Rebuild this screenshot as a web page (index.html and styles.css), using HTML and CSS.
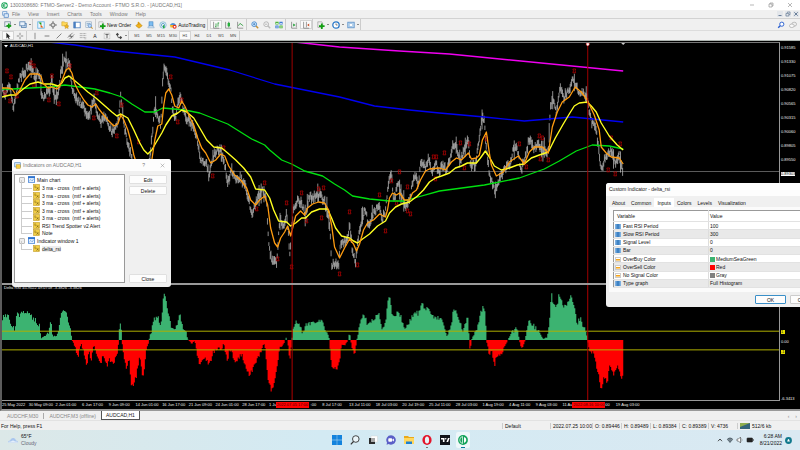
FILE: index.html
```html
<!DOCTYPE html>
<html lang="en">
<head>
<meta charset="utf-8">
<title>Trading terminal</title>
<link rel="stylesheet" href="styles.css">
</head>
<body>
<header class="titlebar">
  <svg class="ico" viewBox="0 0 10 10"><circle cx="5" cy="5" r="4.6" fill="#18a558"/><path d="M4.600 1.600A3.500 3.500 0 0 0 4.600 8.400Z" fill="none" stroke="#fff" stroke-width=".8"/><path d="M6 2V8Q8.300 7.200 8.300 5Q8.300 2.700 6 2" fill="#fff"/></svg>
  <span class="grow">1300308680: FTMO-Server2 - Demo Account - FTMO S.R.O. - [AUDCAD,H1]</span>
  <div class="wincontrols">
    <button aria-label="Minimize"><svg viewBox="0 0 6 6"><path d="M1 3H5" stroke="#888" stroke-width=".6"/></svg></button>
    <button aria-label="Restore"><svg viewBox="0 0 6 6"><path d="M1 2H4V5H1ZM2 2V1H5V4H4" fill="none" stroke="#888" stroke-width=".6"/></svg></button>
    <button aria-label="Close"><svg viewBox="0 0 6 6"><path d="M1 1L5 5M5 1L1 5" stroke="#888" stroke-width=".6"/></svg></button>
  </div>
</header>

<nav class="menubar">
  <svg class="ico" viewBox="0 0 10 10"><rect x="1" y="1" width="6" height="5" fill="#eaf2fb" stroke="#5a8fc8"/><rect x="3" y="4" width="6" height="5" fill="#dbe9f8" stroke="#4a7fc0"/></svg>
  <button>File</button><button>View</button><button>Insert</button><button>Charts</button><button>Tools</button><button>Window</button><button>Help</button>
  <div class="childcontrols">
    <button aria-label="Minimize chart"><svg viewBox="0 0 6 6"><path d="M1.5 4.5H4.5" stroke="#6a7f9a"/></svg></button>
    <button aria-label="Restore chart"><svg viewBox="0 0 6 6"><path d="M1 2.5H3.8V5H1ZM2.4 2V1H5V3.6H4" fill="none" stroke="#6a7f9a" stroke-width=".7"/></svg></button>
    <button aria-label="Close chart"><svg viewBox="0 0 6 6"><path d="M1.3 1.3L4.7 4.7M4.7 1.3L1.3 4.7" stroke="#6a7f9a"/></svg></button>
  </div>
</nav>

<div class="toolbar">
  <div class="group">
    <button class="drop" aria-label="New chart"><svg viewBox="0 0 10 10"><rect x="1" y="1" width="7" height="6" fill="#eef3f8" stroke="#789"/><path d="M6 3V9M3 6H9" stroke="#12a012" stroke-width="2.2"/></svg></button>
    <button class="drop" aria-label="Profiles"><svg viewBox="0 0 10 10"><rect x="3" y="3" width="6" height="5" fill="#d4e4f4" stroke="#5580b0"/><rect x="1" y="1" width="6.500" height="5" fill="#eaf2fb" stroke="#5580b0"/></svg></button>
  </div>
  <div class="group">
    <button aria-label="Market watch"><svg viewBox="0 0 10 10"><rect x="1" y="1" width="8" height="8" fill="#eef6ff" stroke="#5bb0e5"/><path d="M2 2H5.500V5.500Z" fill="#18a018"/><path d="M8 8H4.500V4.500Z" fill="#e06010"/></svg></button>
    <button aria-label="Data window"><svg viewBox="0 0 10 10"><circle cx="5" cy="5" r="2.6" fill="none" stroke="#666"/><path d="M5 0V4M5 6V10M0 5H4M6 5H10" stroke="#666"/></svg></button>
    <button aria-label="Navigator"><svg viewBox="0 0 10 10"><path d="M1 1H4L5 2H8V6H1Z" fill="#ffd95a" stroke="#c89a20" stroke-width=".6"/><path d="M7 4L8 6L10 6L8.500 7.500L9 9.500L7 8.500L5 9.500L5.500 7.500L4 6L6 6Z" fill="#f6b71e" stroke="#a87808" stroke-width=".4"/></svg></button>
    <button aria-label="Terminal"><svg viewBox="0 0 10 10"><rect x="1" y="1.500" width="8" height="7" fill="#fff" stroke="#4a7fc0"/><rect x="1" y="1" width="2.500" height="8" fill="#4a7fc0"/></svg></button>
    <button aria-label="Strategy tester"><svg viewBox="0 0 10 10"><rect x="1" y="1" width="7" height="7" fill="#edf3f8" stroke="#88a0b8" stroke-width=".7"/><path d="M2 3H7M2 5H5" stroke="#7a9fc4"/><circle cx="6" cy="6" r="2" fill="#bfe0ff" stroke="#4a7fc0" stroke-width=".7"/><path d="M7.500 7.500L9.500 9.500" stroke="#c79030" stroke-width="1.300"/></svg></button>
  </div>
  <div class="group">
    <button class="wide"><svg viewBox="0 0 10 10"><path d="M1 1H6L7 3V8H1Z" fill="#f5f5f5" stroke="#999" stroke-width=".7"/><path d="M6 3V10M2.500 6.500H9.500" stroke="#12a012" stroke-width="2.200"/></svg>New Order</button>
    <button aria-label="MetaEditor"><svg viewBox="0 0 10 10"><path d="M1 6L5 2L9 6L5 9Z" fill="#f2b21c" stroke="#a87808" stroke-width=".6"/><path d="M4 1L5 5" stroke="#d99a10" stroke-width="1.500"/></svg></button>
    <button aria-label="Hosting"><svg viewBox="0 0 10 10"><rect x="2.500" y="1" width="5" height="5" fill="#7bbcf0" stroke="#3c80c0" stroke-width=".7"/><path d="M1 8.500Q1 6 3.500 6.500Q5 5 6.500 6.500Q9 6 9 8.500Z" fill="#d5e6f5" stroke="#6a97c4" stroke-width=".6"/></svg></button>
    <button aria-label="Signals"><svg viewBox="0 0 10 10"><circle cx="5" cy="5" r="4" fill="none" stroke="#7ab8d8"/><circle cx="5" cy="5" r="2" fill="none" stroke="#4a9ac8"/><path d="M5 5V9H7V6Z" fill="#22a844"/></svg></button>
    <button class="wide"><svg viewBox="0 0 10 10"><path d="M1 5Q5 0 9 5Z" fill="#4a90d9"/><path d="M1 5L9 5L7 8H2Z" fill="#f2b92c"/><circle cx="7" cy="7.200" r="2.500" fill="#e02a1c"/><rect x="6" y="6.200" width="2" height="2" fill="#fff"/></svg>AutoTrading</button>
  </div>
  <div class="group">
    <button class="on" aria-label="Bar chart"><svg viewBox="0 0 10 10"><path d="M2 1V9H9" fill="none" stroke="#666" stroke-width=".8"/><path d="M5 3V8M5 7H4M7.500 2V7M7.500 2.500H9" stroke="#2a9a3a"/></svg></button>
    <button aria-label="Candlesticks"><svg viewBox="0 0 10 10"><path d="M2 1V9H9" fill="none" stroke="#666" stroke-width=".8"/><path d="M6 1V8" stroke="#177a27"/><rect x="4.500" y="2.500" width="3" height="4" fill="#23b03a"/></svg></button>
    <button aria-label="Line chart"><svg viewBox="0 0 10 10"><path d="M2 1V9H9" fill="none" stroke="#666" stroke-width=".8"/><path d="M3 6L5 3L9 6" fill="none" stroke="#2a9a3a"/></svg></button>
  </div>
  <div class="group">
    <button aria-label="Zoom in"><svg viewBox="0 0 10 10"><path d="M6 6L9 9" stroke="#c79030" stroke-width="1.800"/><circle cx="4" cy="4" r="3" fill="#d4ecff" stroke="#3a7fc8"/><path d="M4 2.500V5.500M2.500 4H5.500" stroke="#2468b0" stroke-width=".8"/></svg></button>
    <button aria-label="Zoom out"><svg viewBox="0 0 10 10"><path d="M6 6L9 9" stroke="#bbb" stroke-width="1.800"/><circle cx="4" cy="4" r="3" fill="#f3f3f3" stroke="#aaa"/><path d="M2.500 4H5.500" stroke="#999" stroke-width=".8"/></svg></button>
    <button aria-label="Tile windows"><svg viewBox="0 0 10 10"><rect x="1" y="1" width="8" height="8" fill="#fff"/><path d="M.500 1H4.500V4.500H.500ZM5.500 5.500H9.500V9H5.500Z" fill="#3fae2a"/><path d="M5.500 1H9.500V4.500H5.500ZM.500 5.500H4.500V9H.500Z" fill="#2c6fd0"/><path d="M1.200 3H4M6.200 3H9M1.200 7.500H4M6.200 7.500H9" stroke="#fff"/></svg></button>
  </div>
  <div class="group">
    <button aria-label="Auto scroll"><svg viewBox="0 0 10 10"><path d="M2 1V9H9" fill="none" stroke="#666" stroke-width=".8"/><path d="M4 3V7L7 5Z" fill="#23a03a"/><path d="M8 2V8" stroke="#666" stroke-width=".7"/></svg></button>
    <button class="on" aria-label="Chart shift"><svg viewBox="0 0 10 10"><path d="M2 1V9H9M5.500 1V8" fill="none" stroke="#666" stroke-width=".8"/><path d="M9 3V7L6.500 5Z" fill="#c84a20"/></svg></button>
  </div>
  <div class="group">
    <button class="drop" aria-label="Indicators"><svg viewBox="0 0 10 10"><path d="M1 1H6L7 3V8H1Z" fill="#eee" stroke="#888" stroke-width=".7"/><path d="M6 3V10M2.500 6.500H9.500" stroke="#12a012" stroke-width="2.200"/></svg></button>
    <button class="drop" aria-label="Periods"><svg viewBox="0 0 10 10"><circle cx="5" cy="5" r="4" fill="#fff" stroke="#2a78c8" stroke-width="1.600"/><path d="M5 3V5H7" fill="none" stroke="#444" stroke-width=".8"/></svg></button>
    <button class="drop" aria-label="Templates"><svg viewBox="0 0 10 10"><rect x="1" y="1.500" width="8" height="7" fill="#bcd9f2" stroke="#5a8fc8"/><rect x="3" y="3.500" width="4" height="3" fill="#fff" stroke="#7aa5d0" stroke-width=".5"/></svg></button>
  </div>
  <div class="search">
    <button aria-label="Search"><svg viewBox="0 0 10 10"><circle cx="6" cy="4" r="2.600" fill="#fff" stroke="#2a5fd0" stroke-width="1.200"/><path d="M4 6L1.500 8.500" stroke="#2a5fd0" stroke-width="1.800"/></svg></button>
    <button aria-label="Chat"><svg viewBox="0 0 10 10"><ellipse cx="6.500" cy="4" rx="3" ry="2.500" fill="#eee" stroke="#999" stroke-width=".7"/><ellipse cx="3.500" cy="6" rx="3" ry="2.200" fill="#f8f8f8" stroke="#999" stroke-width=".7"/></svg></button>
  </div>
</div>

<div class="toolbar lines">
  <div class="group">
    <button class="on" aria-label="Cursor"><svg viewBox="0 0 10 10"><path d="M3 1V8L4.800 6.500L6 9L7 8.500L5.900 6H8Z" fill="#222"/></svg></button>
    <button aria-label="Crosshair"><svg viewBox="0 0 10 10"><path d="M5 1V4M5 6V9M1 5H4M6 5H9" stroke="#555" stroke-width=".8"/></svg></button>
  </div>
  <div class="group">
    <button aria-label="Vertical line"><svg viewBox="0 0 10 10"><path d="M5 1V9" stroke="#555" stroke-width=".8"/></svg></button>
    <button aria-label="Horizontal line"><svg viewBox="0 0 10 10"><path d="M2 5H8" stroke="#555" stroke-width=".9"/></svg></button>
    <button aria-label="Trendline"><svg viewBox="0 0 10 10"><path d="M2 8L8 2" stroke="#555" stroke-width=".9"/></svg></button>
    <button aria-label="Channel"><svg viewBox="0 0 10 10"><path d="M1 7L7 1M3 9L9 3M2 5L8 6M4 3L6 8" stroke="#555" stroke-width=".8"/></svg></button>
    <button aria-label="Fibonacci"><svg viewBox="0 0 10 10"><path d="M1 2H9M1 4.500H9M1 7H9M7 8.500H9" stroke="#777" stroke-width=".8" stroke-dasharray="1.200 .6"/></svg></button>
    <button aria-label="Text">A</button>
    <button aria-label="Text label"><svg viewBox="0 0 10 10"><rect x="1.500" y="1.500" width="7" height="7" fill="none" stroke="#888" stroke-width=".6" stroke-dasharray="1 .6"/><path d="M3 3H7M5 3V7.500" stroke="#444"/></svg></button>
    <button class="drop" aria-label="Arrows"><svg viewBox="0 0 10 10"><path d="M1 3L3 1L5 3L3 5ZM5 7L7 5L9 7L7 9Z" fill="#444"/><path d="M3 4L4 7H6" fill="none" stroke="#444"/></svg></button>
  </div>
  <div class="group frames">
    <button>M1</button><button>M5</button><button>M15</button><button>M30</button><button class="on">H1</button><button>H4</button><button>D1</button><button>W1</button><button>MN</button>
  </div>
</div>

<main class="chart">
  <section class="panel">
    <svg id="price" viewBox="2 43 778 240" preserveAspectRatio="none"></svg>
    <h1><svg viewBox="0 0 4 4"><path d="M0 1H4L2 3.500Z" fill="#fff"/></svg>AUDCAD,H1</h1>
  </section>
  <div class="axis prices">
    <span>0.91585</span><span>0.91330</span><span>0.91075</span><span>0.90820</span><span>0.90565</span><span>0.90315</span><span>0.90060</span><span>0.89805</span><span>0.89550</span><span class="bid">0.89303</span>
  </div>
  <section class="panel sub">
    <svg id="delta" viewBox="2 285 778 117" preserveAspectRatio="none"></svg>
    <h2>Delta RSI 45.9022 49.0758 -3.3826 -3.3826</h2>
  </section>
  <div class="axis levels">
    <span class="level">1</span><span>0.00</span><span class="level">-1</span><span class="low">-6.3413</span>
  </div>
  <div class="dates">
    <span>25 May 2022</span><span>30 May 09:00</span><span>2 Jun 01:00</span><span>6 Jun 17:00</span><span>9 Jun 09:00</span><span>14 Jun 01:00</span><span>16 Jun 17:00</span><span>21 Jun 09:00</span><span>24 Jun 01:00</span><span>28 Jun 17:00</span><span>1 Ju</span><span class="tail">:00</span><span>8 Jul 17:00</span><span>13 Jul 11:00</span><span>18 Jul 03:00</span><span>20 Jul 19:00</span><span>25 Jul 11:00</span><span>28 Jul 03:00</span><span>1 Aug 19:00</span><span>4 Aug 11:00</span><span>9 Aug 03:00</span><span>11 Au</span><span class="tail">:00</span><span>19 Aug 03:00</span>
    <b class="mark first">2022.07.05 17:00</b><b class="mark second">2022.08.16 10:00</b>
  </div>
</main>

<nav class="tabs">
  <button>AUDCHF,M30</button><button>AUDCHF,M3 (offline)</button><button class="active">AUDCAD,H1</button>
  <div class="scroll"><button aria-label="Previous tab">‹</button><button aria-label="Next tab">›</button></div>
</nav>

<footer class="status">
  <span class="grow">For Help, press F1</span>
  <span class="w48">Default</span><span class="w42">2022.07.25 10:00</span><span>O: 0.89446</span><span>H: 0.89489</span><span>L: 0.89384</span><span>C: 0.89389</span><span>V: 4736</span>
  <span class="net"><svg viewBox="0 0 10 6"><rect width="10" height="6" fill="#35657a"/><path d="M0 0H10L0 4Z" fill="#8fae4e"/></svg>512/6 kb</span>
</footer>

<div class="taskbar">
  <div class="weather">
    <svg viewBox="0 0 12 8"><path d="M1 6.500Q1 4.500 3 4.500Q4 1.500 6.500 2Q8.500 2.200 9 4.500Q11 4.500 11 6.500Z" fill="#a9c6ee"/><path d="M1 6.500Q2 5 4 5.500Q6 3.500 8 5.500Q10 5 11 6.500Z" fill="#e4eefb"/></svg>
    <p>65°F<br><small>Cloudy</small></p>
  </div>
  <div class="apps">
    <button aria-label="Start"><svg viewBox="0 0 10 10"><path d="M0 0H4.800V4.800H0ZM5.200 0H10V4.800H5.200ZM0 5.200H4.800V10H0ZM5.200 5.200H10V10H5.200Z" fill="#1383dd"/></svg></button>
    <button aria-label="Search"><svg viewBox="0 0 10 10"><circle cx="5.800" cy="4" r="3.300" fill="#eaf4f8" stroke="#333" stroke-width=".9"/><path d="M3.500 6.500L.800 9.300" stroke="#333" stroke-width="1.200"/></svg></button>
    <button aria-label="Task view"><svg viewBox="0 0 10 10"><rect x="3" y="1" width="6.500" height="6" fill="#fff" stroke="#ccc" stroke-width=".4"/><rect x="1" y="3" width="6" height="6" fill="#2b2b2b"/><rect x="3" y="3" width="4" height="4" fill="#aaa"/></svg></button>
    <button aria-label="Chat"><svg viewBox="0 0 10 10"><path d="M5 .3A4.700 4.700 0 1 1 2.600 9L.600 9.700L1 7.500A4.700 4.700 0 0 1 5 .3" fill="#5b5fc7"/><rect x="2.300" y="3.200" width="3.800" height="3.600" rx=".8" fill="#fff"/><path d="M6.400 4.600L7.900 3.500V6.500L6.400 5.500Z" fill="#fff"/></svg></button>
    <button aria-label="File Explorer"><svg viewBox="0 0 10 10"><path d="M0 1H4L5 2H10V9H0Z" fill="#e9a91b"/><path d="M0 3H10V9H0Z" fill="#ffd75e"/><path d="M2 9V6.500H8V9Z" fill="#1f7fd0"/></svg></button>
    <button class="running" aria-label="Opera"><svg viewBox="0 0 10 10"><ellipse cx="5" cy="5" rx="4.600" ry="5" fill="#e3142a"/><ellipse cx="5" cy="5" rx="2.100" ry="3.500" fill="#e9f3f7"/></svg></button>
    <button aria-label="TradingView"><svg viewBox="0 0 10 10"><rect width="10" height="10" fill="#0f1218"/><path d="M1 3H4.500V7H2.900V4.600H1ZM6.400 7L8 3H9.700L8.100 7Z" fill="#fff"/><circle cx="5.700" cy="3.800" r=".8" fill="#fff"/></svg></button>
    <button class="current" aria-label="Trading terminal"><svg viewBox="0 0 10 10"><circle cx="5" cy="5" r="4.900" fill="#12a35a"/><path d="M4.500 1.500A3.600 3.600 0 0 0 4.500 8.500Z" fill="#12a35a" stroke="#fff" stroke-width=".7"/><path d="M6 2V8Q8.300 7.200 8.300 5Q8.300 2.700 6 2" fill="#fff"/></svg></button>
  </div>
  <div class="tray">
    <svg viewBox="0 0 8 8"><path d="M2 5.200L4 3L6 5.200" fill="none" stroke="#222" stroke-width=".8"/></svg>
    <svg viewBox="0 0 8 8"><path d="M.800 3.200Q4 0 7.200 3.200L4 7Z" fill="#54626c"/><path d="M1.500 4Q4 2 6.500 4M2.500 5.200Q4 4 5.500 5.200" fill="none" stroke="#c8dbe2" stroke-width=".4"/></svg>
    <svg viewBox="0 0 8 8"><path d="M1 3H2.500L4.500 1V7L2.500 5H1Z" fill="#fff" stroke="#444" stroke-width=".6"/><path d="M5.500 2.500Q6.800 4 5.500 5.500" fill="none" stroke="#777" stroke-width=".6"/></svg>
    <svg viewBox="0 0 8 8"><rect x="1" y="2" width="5.500" height="4" rx=".6" fill="#222" stroke="#222" stroke-width=".6"/><path d="M7.300 3.200V4.800" stroke="#222" stroke-width=".8"/></svg>
    <p>6:28 AM<br>8/21/2022</p>
    <svg class="bell" viewBox="0 0 8 8"><circle cx="4" cy="4" r="3.900" fill="#10788c"/><path d="M2.200 5.200Q3 4.500 3 3.300Q4 1.500 5 3.300Q5 4.500 5.800 5.200Z" fill="#fff"/></svg>
  </div>
</div>

<section class="dialog indicators" aria-label="Indicators on AUDCAD,H1">
  <header>
    <svg class="ico" viewBox="0 0 10 10"><rect x="1" y="1" width="8" height="6" fill="#d8e8f8" stroke="#5a8fc8"/><rect x="3" y="4" width="6" height="5" fill="#f7cf45" stroke="#b08a18" stroke-width=".6"/></svg>
    <span class="grow">Indicators on AUDCAD,H1</span>
    <button aria-label="Help">?</button><button aria-label="Close dialog"><svg viewBox="0 0 6 6"><path d="M.800 .8L5.200 5.200M5.200 .8L.800 5.200" stroke="#888" stroke-width=".6"/></svg></button>
  </header>
  <div class="body">
    <ul class="tree" id="tree"></ul>
    <div class="actions"><button>Edit</button><button>Delete</button><button class="last">Close</button></div>
  </div>
</section>

<section class="dialog custom" aria-label="Custom Indicator - delta_rsi">
  <header>Custom Indicator - delta_rsi</header>
  <nav><button>About</button><button>Common</button><button class="active">Inputs</button><button>Colors</button><button>Levels</button><button>Visualization</button></nav>
  <div class="page">
    <table>
      <thead><tr><th>Variable</th><th>Value</th></tr></thead>
      <tbody>
        <tr><td><i class="num"></i>Fast RSI Period</td><td>100</td></tr>
        <tr><td><i class="num"></i>Slow RSI Period</td><td>300</td></tr>
        <tr><td><i class="num"></i>Signal Level</td><td>0</td></tr>
        <tr><td><i class="num"></i>Bar</td><td>0</td></tr>
        <tr><td><i class="col"></i>OverBuy Color</td><td><i class="swatch sea"></i>MediumSeaGreen</td></tr>
        <tr><td><i class="col"></i>OverSell Color</td><td><i class="swatch red"></i>Red</td></tr>
        <tr><td><i class="col"></i>No Signal Color</td><td><i class="swatch gray"></i>Gray</td></tr>
        <tr><td><i class="num"></i>Type graph</td><td>Full Histogram</td></tr>
      </tbody>
    </table>
  </div>
  <footer><button class="default">OK</button><button>Cancel</button></footer>
</section>
<script src="chart.js"></script>
</body>
</html>
```
FILE: styles.css
```css
* { box-sizing: border-box; }
html, body { height: 100%; }
body {
  margin: 0;
  display: flex;
  flex-direction: column;
  position: relative;
  overflow: hidden;
  background: #f0f0f0;
  color: #111;
  font: 5px/6px "Liberation Sans", Arial, sans-serif;
}
button {
  margin: 0;
  padding: 0;
  border: 0;
  background: none;
  color: inherit;
  font: inherit;
}
svg { display: block; }
p, h1, h2, ul { margin: 0; padding: 0; font: inherit; }
.grow { flex: 1; }
.ico { width: 7px; height: 7px; }

/* window frame */
.titlebar {
  display: flex;
  align-items: center;
  gap: 2px;
  height: 10px;
  padding-left: 1px;
  background: #fff;
  color: #777;
}
.wincontrols { display: flex; gap: 13px; padding-right: 7px; }
.wincontrols svg { width: 6px; height: 6px; }
.menubar {
  display: flex;
  align-items: center;
  gap: 8px;
  height: 8px;
  padding-left: 2px;
  color: #777;
}
.menubar .ico { margin-right: -5px; }
.childcontrols { display: flex; gap: 2px; margin-left: auto; padding-right: 1px; }
.childcontrols button { background: #e3e6ea; }
.childcontrols svg { width: 6px; height: 6px; }

/* toolbars */
.toolbar {
  display: flex;
  align-items: center;
  height: 12px;
  border-top: 1px solid #d2d2d2;
}
.toolbar.lines { height: 10px; border-top-color: #dcdcdc; }
.group {
  display: flex;
  height: 100%;
  align-items: center;
  padding-left: 2px;
  border-right: 1px solid #ccc;
}
.group button {
  display: flex;
  align-items: center;
  justify-content: center;
  width: 12px;
  height: 9px;
}
.group svg { width: 8px; height: 8px; }
.group .drop { width: 15px; gap: 2px; }
.drop::after {
  content: "";
  border: 1px solid transparent;
  border-top-color: #222;
  border-bottom: 0;
}
.group .wide { width: auto; gap: 1px; padding: 0 2px 0 0; color: #111; }
.group .on { background: #fafafa; border: 1px solid #d4d4d4; }
.frames { font-size: 4px; color: #444; }
.search { display: flex; gap: 4px; margin-left: auto; padding-right: 3px; }
.search svg { width: 8px; height: 8px; }

/* chart window */
.chart {
  flex: 1;
  min-height: 0;
  display: grid;
  grid-template-columns: 1fr 20px;
  grid-template-rows: 241fr 118fr 8px;
  padding-top: 1px;
  border-top: 1px solid #aeb4b0;
  border-left: 2px solid #5c5c5c;
  border-bottom: 2px solid #999;
  background: #000;
  color: #eee;
  font: 4px/4px "Liberation Sans", Arial, sans-serif;
}
.panel {
  position: relative;
  min-height: 0;
  border-top: 1px solid #777;
  border-right: 1px solid #999;
}
.panel.sub { border-top: 2px solid #999; border-bottom: 1px solid #999; }
.panel > svg { position: absolute; inset: 0; width: 100%; height: 100%; }
.panel h1, .panel h2 { position: absolute; top: 1px; left: 2px; display: flex; gap: 2px; }
.panel h1 svg { width: 4px; height: 4px; }
.axis { display: flex; flex-direction: column; align-items: flex-start; padding-left: 1px; min-height: 0; }
.prices { gap: 10px; padding-top: 4px; }
.bid { background: #fff; color: #000; }
.levels { gap: 6px; padding-top: 45px; border-top: 2px solid #999; }
.level { min-width: 4px; background: #e8e000; color: #222; }
.low { margin-top: auto; }
.dates {
  position: relative;
  display: grid;
  grid-template-columns: repeat(29, 1fr);
  padding: 2px 4px 0 0;
  white-space: nowrap;
}
.dates .tail { padding-left: 15px; }
.mark { position: absolute; top: 1px; padding: 1px; background: #f00; color: #500; font-weight: normal; line-height: 4px; }
.mark.first { left: 35.2%; }
.mark.second { left: 73.3%; }

/* chart tabs and status line */
.tabs { display: flex; align-items: center; height: 10px; padding-left: 1px; color: #888; border-bottom: 1px solid #e2e2e2; }
.tabs > button { padding: 0 5px 0 6px; border-right: 1px solid #aaa; }
.tabs > button:nth-child(2) { padding: 0 5px; border: 0; }
.tabs .active { height: 9px; padding: 0 4px; border: 1px solid #555; border-top: 0; background: #fff; color: #222; }
.scroll { display: flex; gap: 6px; margin-left: auto; padding-right: 3px; }
.status { display: flex; align-items: center; height: 9px; padding-left: 1px; }
.status span:not(.grow) { width: 29px; padding-left: 2px; border-left: 1px solid #ccc; white-space: nowrap; }
.status .w48:not(.grow) { width: 48px; }
.status .w42:not(.grow) { width: 42px; }
.status .net:not(.grow) { display: flex; width: 63px; gap: 2px; }
.net svg { width: 10px; height: 6px; }

/* desktop taskbar */
.taskbar {
  display: grid;
  grid-template-columns: 1fr auto 1fr;
  align-items: center;
  height: 20px;
  background: linear-gradient(90deg, #dce8e8, #d3eaf3 40%, #dae9f2);
}
.weather { display: flex; align-items: center; gap: 2px; padding-left: 7px; line-height: 7px; }
.weather svg { width: 12px; height: 8px; }
.weather small { font-size: 5px; color: #667; }
.apps { display: flex; gap: 4px; }
.apps button { position: relative; width: 14px; height: 16px; padding: 3px 2px; border-radius: 2px; }
.apps svg { width: 10px; height: 10px; }
.current { background: #eef7fa; }
.current::after, .running::after {
  content: "";
  position: absolute;
  bottom: 0;
  left: 5px;
  width: 4px;
  height: 1px;
  background: #0a7a9a;
}
.running::after { left: 6px; width: 2px; background: #777; }
.tray { display: flex; align-items: center; justify-content: flex-end; gap: 2px; padding-right: 8px; line-height: 7px; text-align: right; }
.tray svg { width: 8px; height: 8px; }
.tray p { padding-left: 4px; }
.tray .bell { width: 7px; height: 7px; margin-left: 1px; }

/* dialogs */
.dialog { position: absolute; border-radius: 3px; background: #f0f0f0; overflow: hidden; }
.indicators { top: 159px; left: 12px; width: 159px; height: 128px; display: flex; flex-direction: column; }
.indicators header {
  display: flex;
  align-items: center;
  gap: 2px;
  height: 12px;
  padding: 0 6px 0 2px;
  background: #fdfdfd;
  color: #777;
}
.indicators header svg { width: 7px; height: 7px; }
.indicators header button + button { margin-left: 13px; }
.indicators header button svg { width: 5px; height: 5px; }
.body { flex: 1; display: flex; gap: 4px; padding: 3px 4px 4px 2px; }
.tree {
  flex: 1;
  display: flex;
  flex-direction: column;
  padding: 1px 4px;
  border: 1px solid #999;
  background: #fff;
  list-style: none;
  white-space: pre;
}
.actions { display: flex; flex-direction: column; gap: 2px; width: 38px; padding-top: 1px; }
.actions button { height: 9px; border: 1px solid #e0e0e0; border-radius: 1px; background: #fdfdfd; }
.actions .last { margin-top: auto; }

.tree ul { padding-left: 9px; list-style: none; }
.tree li { position: relative; }
.tree .row { display: flex; align-items: center; gap: 2px; height: 7px; margin-bottom: 1px; }
.tree ul .row { margin-bottom: 0; }
.tree ul li:nth-child(odd) .row { margin-bottom: 1px; }
.tree .branch::before { content: ""; width: 4px; height: 4px; margin-right: 1px; border: 1px solid #bbb; border-radius: 1px; background: #eee; }
.tree .branch svg { width: 7px; height: 7px; }
.tree .leaf { padding-left: 5px; }
.tree .leaf::before { content: ""; position: absolute; left: -7px; top: -4px; width: 10px; height: 8px; border: 1px solid #ccc; border-width: 0 0 1px 1px; }
.tree .leaf svg { width: 7px; height: 7px; }
.tree .selected span { background: #eee; }

.custom { top: 183px; left: 606px; width: 230px; }
.custom header { height: 13px; padding: 3px; background: #fdfdfd; color: #222; }
.custom nav { display: flex; align-items: flex-end; height: 11px; padding-left: 3px; }
.custom nav button { height: 8px; padding: 0 3px; }
.custom nav .active { height: 9px; background: #fff; }
.page { margin-left: 3px; padding: 3px 4px 4px; background: #fbfbfb; }
table { width: 100%; height: 78px; border: 1px solid #999; border-collapse: collapse; background: #fff; }
th, td { padding: 0 2px; font-weight: normal; text-align: left; border-bottom: 1px solid #e2e2e2; }
th { height: 11px; }
th:first-child { width: 95px; padding-left: 3px; }
td:first-child { padding-left: 1px; }
td + td, th + th { border-left: 1px solid #ddd; padding-left: 1px; }
tbody tr:nth-child(even) { background: #e9e9e9; }
td i { display: inline-block; width: 6px; height: 5px; margin-right: 2px; vertical-align: middle; }
.num { background: linear-gradient(90deg, #8dbce8, #2f77bd, #8dbce8); }
.col { background: linear-gradient(#fff 20%, #f6a51c 40%, #f6a51c 70%, #fff); border: 1px solid #ccc; }
td .swatch { width: 5px; margin-right: 1px; }
.sea { background: mediumseagreen; }
.red { background: red; }
.gray { background: gray; }
.custom footer { display: flex; gap: 4px; padding: 3px 0 3px 149px; }
.custom footer button { width: 31px; height: 9px; border: 1px solid #ccc; border-radius: 1px; background: #fdfdfd; }
.custom footer .default { border-color: #3a8fc8; }
```
FILE: chart.js
```js
// Deterministic noise, so that the bars look the same on every load
let seed = 7;
const rnd = () => (seed = (seed * 16807) % 2147483647) / 2147483647 - 0.5;

const pairs = s => s.trim().split(/\s+/).map(p => p.split(',').map(Number));
const at = (pts, x) => {
  let i = 1;
  while (i < pts.length - 1 && pts[i][0] < x) i++;
  const [a, b] = [pts[i - 1], pts[i]];
  return a[1] + (b[1] - a[1]) * (x - a[0]) / (b[0] - a[0] || 1);
};
const path = (d, stroke, width) =>
  `<path d="${d}" fill="none" stroke="${stroke}" stroke-width="${width}" stroke-linejoin="round"/>`;
const line = (s, stroke, width) => path('M' + s.trim().replace(/\s+/g, 'L'), stroke, width);

const price = pairs(`2,90 5,96 8,85 10,88 13,108 16,97 19,78 23,75 28,68 31,66 35,80 37,73 40,76 42,98 45,96 49,92
52,80 54,98 58,98 61,72 64,60 66,60 70,66 72,88 75,95 79,102 83,105 87,115 90,113 94,100 98,115 101,124 105,118 109,125
112,132 117,125 119,115 121,95 124,125 127,140 130,150 134,165 140,185 145,180 149,165 152,140 155,108 158,115 161,125
163,80 165,65 168,80 171,88 173,112 176,118 180,95 182,103 186,120 190,122 195,130 199,148 201,162 206,162 209,175
213,158 217,150 221,152 225,165 228,182 232,170 237,180 241,178 246,188 250,205 252,215 256,205 260,195 263,190 267,200
268,230 270,252 272,260 277,262 279,235 280,220 284,226 287,215 289,235 290,258 292,228 294,208 298,200 302,203 306,220
309,197 313,198 320,195 324,200 329,215 331,240 332,265 339,266 341,245 345,242 349,235 350,225 353,252 356,262 359,235
362,220 366,210 369,228 373,215 377,208 380,205 382,220 386,212 388,190 390,175 392,172 394,200 399,185 402,195 406,205
410,200 415,175 419,185 421,162 426,168 429,160 433,172 436,163 440,172 443,165 447,172 451,158 453,145 457,147 461,160
465,150 469,140 471,165 476,165 480,140 482,120 485,120 487,150 490,175 495,190 500,180 506,168 511,165 514,150 518,150
522,170 527,155 530,138 534,148 539,145 543,150 549,153 551,110 553,98 557,112 561,85 564,98 569,92 573,80 576,85
580,95 584,92 588,100 592,122 597,130 600,155 602,172 606,158 612,150 616,165 620,155 624,172`);

const orange = `2,88 8,88 12,89 16,95 20,90 25,80 30,74 38,74 41,76 43,83 48,88 52,87 57,89 60,86 63,78 66,70 69,68
72,73 75,84 79,92 84,100 88,105 92,107 96,104 99,109 103,114 108,120 114,126 118,124 121,115 124,120 128,130 131,141
134,155 138,168 146,172 152,160 155,140 158,126 162,124 164,105 166,93 169,89 172,95 175,106 179,108 182,101 185,106
190,117 194,125 198,138 202,148 206,153 211,163 216,160 221,154 225,156 229,166 235,175 241,180 247,188 251,200 256,205
260,200 265,196 268,205 271,228 275,243 278,247 281,238 285,232 288,226 291,236 293,228 296,216 301,211 305,215 308,208
313,204 319,202 325,203 329,210 332,225 335,247 340,258 345,248 350,239 354,244 357,251 360,244 364,230 368,223 374,220
380,214 386,217 388,210 390,198 393,193 397,195 400,193 405,200 410,200 413,193 417,190 421,180 426,171 430,169 440,168
446,170 452,162 457,158 462,160 469,153 472,159 477,158 480,155 483,140 487,132 490,153 492,165 497,176 504,172 510,162
519,156 525,164 530,152 535,147 543,147 549,153 553,127 558,112 563,102 570,97 576,87 582,92 588,100 595,115 600,130
602,147 607,153 612,157 620,158 624,164`;

const yellow = `2,97 10,95 16,95 22,90 30,84 38,82 44,84 52,84 58,86 62,83 65,78 69,76 74,80 80,85 88,92 96,98 104,105
112,112 117,116 121,114 128,118 134,130 140,143 144,150 148,154 152,150 156,143 162,133 166,125 172,116 178,113 182,110
187,112 194,118 200,128 207,140 214,147 222,148 228,153 236,160 244,168 251,177 256,189 265,190 270,198 274,210 279,221
287,222 291,226 296,223 302,218 306,218 312,212 320,209 328,209 332,218 336,228 342,236 350,238 354,241 358,243 363,239
370,234 378,226 386,221 390,213 396,207 402,204 410,202 418,196 424,190 430,182 436,178 442,176 450,173 456,168 462,166
468,163 477,163 481,158 486,151 490,157 495,166 502,170 510,168 518,165 525,164 532,158 540,155 549,152 556,138 564,124
570,114 575,106 580,103 588,102 592,106 597,112 602,123 610,136 618,145 624,150`;

const green = `2,89 12,89 30,88 50,87 65,85 80,87 95,89 110,93 122,97 132,104 145,112 155,112 163,108 185,110 200,113
228,124 252,139 265,145 270,150 282,160 292,164 305,171 323,176 335,184 345,190 353,196 370,199 390,201 405,201 415,198
440,191 485,185 520,178 545,169 560,161 577,151 593,145 610,146 624,149`;

const arrows = pairs(`7,71 11,77 31,63 34,66 34,85 52,76 70,66 5,93 10,101 17,96 49,100 59,104 97,93 122,105 94,118
117,136 139,142 171,77 182,100 178,122 224,148 213,176 257,209 265,183 287,203 302,193 307,221 319,189 324,188 322,218
278,259 292,267 340,274 358,265 350,212 380,195 386,231 392,181 400,172 408,187 397,203 408,211 411,214 434,157 437,157
436,179 445,153 461,143 470,144 465,168 487,139 520,144 540,136 543,138 541,159 549,160 527,167 575,71 612,138 621,144
609,170 616,174`);

let bars = '';
for (let x = 2.5; x < 624; x += 0.7) {
  const y = at(price, x) + rnd() * 6;
  const reach = 2 + Math.abs(rnd()) * 6 + (rnd() > 0.46 ? 7 : 0);
  bars += `M${x.toFixed(1)} ${(y - reach).toFixed(1)}V${(y + reach * 0.8).toFixed(1)}`;
}
const marks = arrows.map(([x, y]) =>
  `M${x - 1.4} ${y - 2}h2.800l-.600 1.800l.600 2h-2.800l.600-2z`).join('');

document.getElementById('price').innerHTML =
  path('M2 171.500H780', '#5a5a5a', 1) +
  path(bars, '#c8c8c8', 0.7) +
  path(marks, '#b00000', 0.8) +
  line('48,42 75,45 115,51 175,57 230,70 275,84 340,97 375,106 410,110 440,113 485,117 525,121 573,117 624,122', '#0000f0', 1.3) +
  line('295,42 340,47 400,51 450,54 624,71', '#f000f0', 1.5) +
  line(green, '#00e010', 1.3) +
  line(yellow, '#ffff20', 1.4) +
  line(orange, '#ff9c10', 1.3) +
  path('M292.500 43V283M588.500 43V283', '#a00000', 1) +
  '<path d="M587 43h3v2l-1.500 1l-1.500-1z" fill="#fff" stroke="#f00" stroke-width=".4"/><path d="M622 43h4l-2 2z" fill="#ccc"/>';

// Histogram of the oscillator: pixel height of each bar's end, zero level at 341
const delta = pairs(`2,320 5,315 8,316 12,328 15,330 17,315 20,317 23,312 27,313 29,312 32,318 36,321 38,327 40,326
41,340 44,336 48,335 51,323 53,338 57,336 59,330 60,318 63,313 66,313 70,326 72,341 75,347 78,358 81,345 84,354 87,369
89,348 91,364 94,345 98,360 101,365 103,355 107,367 110,360 113,366 117,357 119,341 120,323 121,323 122,342 124,357
127,372 129,358 132,390 136,380 140,357 143,383 146,355 149,342 152,330 154,318 156,320 158,315 161,328 163,310 164,290
166,300 169,316 172,331 176,328 180,315 183,328 186,332 188,340 192,345 195,342 197,353 200,366 204,357 210,366 214,352
222,350 224,345 228,365 230,350 236,363 242,355 250,378 256,364 262,350 265,345 268,378 272,395 277,370 280,350 285,344
286,338 288,342 290,362 292,345 293,333 295,325 297,322 300,325 303,335 307,325 312,323 318,321 323,322 326,330 330,340
331,360 333,372 337,370 340,365 342,345 346,346 349,340 350,330 351,342 353,350 355,358 357,342 359,333 361,322 364,315
366,317 368,326 371,322 375,319 379,313 382,328 386,325 389,296 390,295 392,312 395,320 398,313 401,316 405,332 409,325
412,318 416,312 419,315 422,305 426,308 430,312 435,318 441,318 445,325 447,338 452,325 454,308 457,314 460,320 463,332
466,326 468,313 470,341 471,356 472,341 474,336 478,330 481,315 483,308 486,312 487,341 490,358 492,350 495,367 498,356
503,354 508,342 512,333 516,330 519,333 520,342 522,350 525,345 528,328 530,321 534,326 538,330 541,335 544,340 548,338
550,325 552,292 554,305 557,310 560,294 564,308 569,303 572,297 575,308 578,325 581,318 584,330 587,330 588,341 590,350
594,355 598,370 602,390 605,378 608,384 611,366 615,376 619,367 622,378 624,378`);
let up = '', down = '';
for (let x = 2.5; x < 624; x++) {
  const v = at(delta, x) - 341;
  const h = v + rnd() * Math.min(5, Math.abs(v) * 0.5);
  const bar = `M${x} 341v${h.toFixed(1)}`;
  if (h < 0) up += bar; else down += bar;
}
document.getElementById('delta').innerHTML =
  path(up, '#3cb371', 1.1) + path(down, '#ff0000', 1.1) +
  path('M2 332H780M2 351H780', '#b0b000', 1) +
  path('M292.500 285V402M588.500 285V402', '#b00000', 1);

// Indicator tree of the dialog
const windowIcon = '<svg viewBox="0 0 10 10"><rect x=".5" y="1" width="9" height="8" fill="#eaf3ff" stroke="#2f74d0"/><rect y=".5" width="10" height="2.500" fill="#2f74d0"/><path d="M2 7L4 5L6 7L8 4" fill="none" stroke="#5a9ae0"/></svg>';
const leafIcon = '<svg viewBox="0 0 10 10"><rect x=".5" y=".5" width="9" height="9" fill="#f3cf45" stroke="#b8942a" stroke-width=".7"/><path d="M3 2Q2 5 4 6M5 4L8 8M8 5L5 8" fill="none" stroke="#6d5510" stroke-width=".9"/></svg>';
const groups = [
  ['Main chart', [...Array(5).fill('3 ma - cross  (mtf + alerts)'), 'RSI Trend Spotter v2 Alert', 'Note']],
  ['Indicator window 1', ['delta_rsi']]
];
document.getElementById('tree').innerHTML = groups.map(([name, items]) =>
  `<li><div class="row branch">${windowIcon}<span>${name}</span></div><ul>` +
  items.map(t => `<li><div class="row leaf${t === 'delta_rsi' ? ' selected' : ''}">${leafIcon}<span>${t}</span></div></li>`).join('') +
  '</ul></li>').join('');
```
